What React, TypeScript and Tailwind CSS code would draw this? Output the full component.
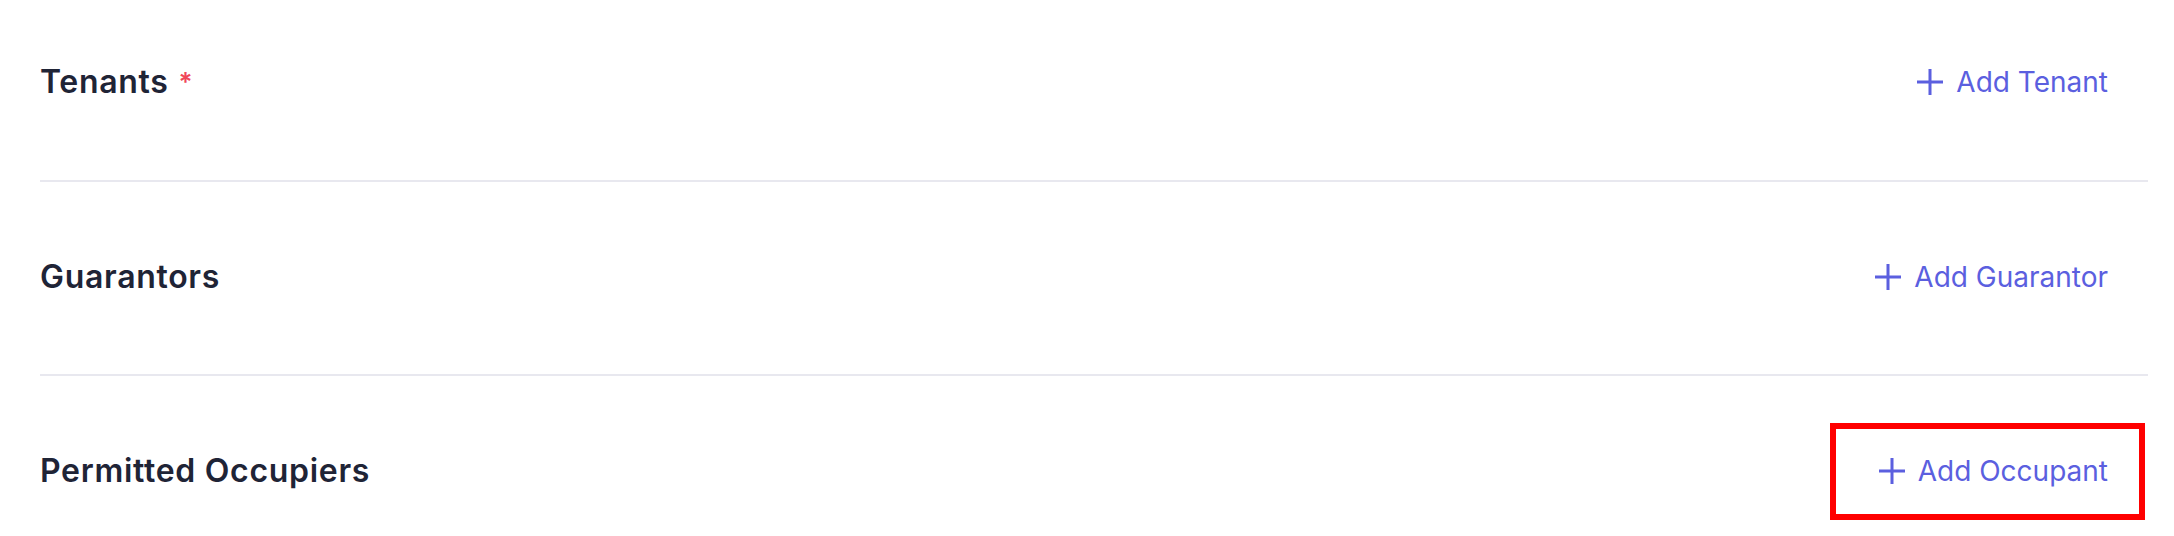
import React from "react";

function PlusIcon() {
  return (
    <svg width="28" height="28" viewBox="0 0 28 28" fill="none" className="shrink-0">
      <path d="M14 1v26M1 14h26" stroke="#5b5fdf" strokeWidth="3" />
    </svg>
  );
}

function AddButton({ label, marked }: { label: string; marked?: boolean }) {
  return (
    <div className="relative">
      <button className="flex h-10 items-center gap-[12px] text-[28px] leading-[40px] text-[#5b5fdf] font-['Inter',sans-serif]">
        <PlusIcon />
        <span>{label}</span>
      </button>
      {/* annotation box round the button */}
      {marked && (
        <div className="pointer-events-none absolute -left-[48px] -right-[37px] -top-[28px] -bottom-[29px] border-[6px] border-[#ff0000]" />
      )}
    </div>
  );
}

function Section({
  title,
  action,
  required,
  marked,
  className,
}: {
  title: string;
  action: string;
  required?: boolean;
  marked?: boolean;
  className: string;
}) {
  return (
    <div className={`flex items-center justify-between pr-[40px] ${className}`}>
      <div className="flex h-10 items-start font-['Inter',sans-serif] text-[32px] leading-[40px] font-semibold tracking-[0.7px] text-[#1f2436]">
        <span>{title}</span>
        {required && <span className="ml-[10px] text-[26px] leading-[40px] font-semibold text-[#f0475a]">*</span>}
      </div>
      <AddButton label={action} marked={marked} />
    </div>
  );
}

export default function App() {
  return (
    <div className="h-[536px] w-full overflow-hidden bg-white">
      <div className="ml-[40px] mr-[26px]">
        <Section title="Tenants" action="Add Tenant" required className="h-[182px] pt-[62px] pb-[78px] border-b-2 border-[#e8e8ef]" />
        <Section title="Guarantors" action="Add Guarantor" className="h-[194px] pt-[75px] pb-[77px] border-b-2 border-[#e8e8ef]" />
        <Section title="Permitted Occupiers" action="Add Occupant" marked className="pt-[75px] pb-[77px]" />
      </div>
    </div>
  );
}
